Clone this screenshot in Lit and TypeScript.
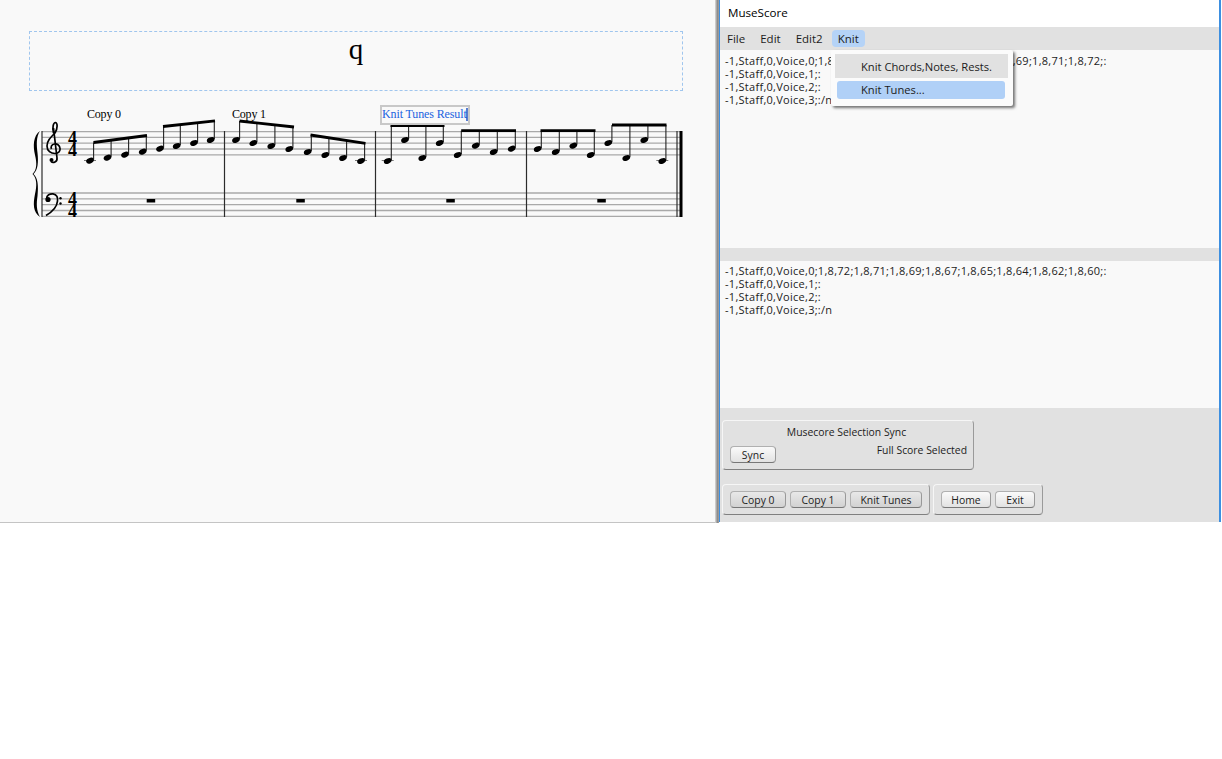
import { LitElement, html, css, svg } from 'lit';
import { customElement } from 'lit/decorators.js';

type Group = { heads: [number, number][]; beam: [number, number, number, number] };

const FORWARD = '-1,Staff,0,Voice,0;1,8,60;1,8,62;1,8,64;1,8,65;1,8,67;1,8,69;1,8,71;1,8,72;:';
const REVERSE = '-1,Staff,0,Voice,0;1,8,72;1,8,71;1,8,69;1,8,67;1,8,65;1,8,64;1,8,62;1,8,60;:';
const VOICES = ['-1,Staff,0,Voice,1;:', '-1,Staff,0,Voice,2;:', '-1,Staff,0,Voice,3;:/n'];

const GROUPS: Group[] = [
  { heads: [[90, 160.7], [107.5, 157.7], [125, 154.7], [142.7, 151.7]], beam: [94, 142.5, 146.5, 135.5] },
  { heads: [[160, 148.7], [176.7, 146], [194, 143], [210.7, 140]], beam: [163.5, 126.5, 214.5, 120.8] },
  { heads: [[236, 140], [253.3, 143], [271.3, 146], [289.3, 149]], beam: [240, 121, 293.5, 127] },
  { heads: [[307.7, 152], [325.3, 155], [343, 158], [361, 161]], beam: [311, 135, 365, 143.3] },
  { heads: [[387.7, 161], [405, 140], [422.3, 158], [439.7, 143]], beam: [391, 125.7, 444, 125.7] },
  { heads: [[457.7, 155], [475.7, 145.7], [493.7, 152], [511.7, 148.7]], beam: [461.7, 130.7, 515.5, 130.7] },
  { heads: [[537.7, 149], [555.7, 152], [573.3, 145.7], [590.7, 155]], beam: [541, 130.7, 595, 130.7] },
  { heads: [[608.3, 143], [626.3, 158], [644.3, 140], [662.3, 161]], beam: [612.5, 125, 666, 125] },
];

const TREBLE_LINES = [131.7, 137.4, 143.2, 149, 154.8];
const BASS_LINES = [193, 198.8, 204.6, 210.5, 216.3];
const BARLINES = [224.5, 375.5, 526.5];
const RESTS = [150.7, 300.3, 450.3, 601.3];

@customElement('app-root')
export class AppRoot extends LitElement {
  static styles = css`
    :host {
      display: block;
      width: 1222px;
      height: 759px;
      background: #fff;
      overflow: hidden;
    }

    .window {
      display: flex;
      height: 523px;
    }

    .score-pane {
      width: 715px;
      flex: none;
      height: 522px;
      background: #f9f9f9;
      border-bottom: 1px solid #c4c4c4;
    }

    .title-frame {
      height: 58px;
      margin: 31px 32px 0 29px;
      border: 1px dashed #a0c6ee;
      text-align: center;
      font: 29px/34px "Liberation Serif", serif;
      color: #000;
    }

    .staff {
      display: block;
      margin-top: 9px;
    }

    .splitter {
      width: 4px;
      flex: none;
      height: 523px;
      background: linear-gradient(90deg, #d0d0d0 0, #c8c8c8 25%, #8c8c8c 50%, #8c8c8c 75%, #a8a8a8 100%);
    }

    .plugin {
      position: relative;
      width: 499px;
      flex: none;
      height: 522px;
      border-left: 1px solid #3d8fe0;
      border-right: 2px solid #3d8fe0;
      display: flex;
      flex-direction: column;
      background: #e1e1e1;
      font: 10.4px/13px "Open Sans", "Noto Sans", sans-serif;
      color: #1c1c1c;
    }

    .titlebar {
      height: 27px;
      flex: none;
      background: #fff;
      padding-left: 8px;
      font-size: 11.6px;
      line-height: 26px;
      color: #000;
    }

    .menubar {
      height: 23px;
      flex: none;
      display: flex;
      align-items: center;
      padding-left: 1px;
      font-size: 11.5px;
    }

    .menubar span {
      height: 17px;
      line-height: 17px;
      padding: 0 6px;
      margin-right: 3px;
      border-radius: 4px;
    }

    .menubar span.open {
      background: #b5d3f7;
    }

    .editor {
      background: #f9f9f9;
      padding: 4px 5px;
      white-space: pre;
      overflow: hidden;
      font-size: 11px;
      letter-spacing: 0.28px;
    }

    .editor.top {
      height: 190px;
      flex: none;
    }

    .editor.bottom {
      height: 140px;
      flex: none;
      margin-top: 13px;
      padding-top: 3px;
    }

    .menu {
      position: absolute;
      left: 111px;
      top: 50px;
      width: 182px;
      height: 56px;
      padding-top: 4px;
      box-sizing: border-box;
      background: #fbfbfb;
      box-shadow: 2px 2px 3px rgb(0 0 0 / 0.55);
      border-radius: 2px;
      font-size: 11.2px;
    }

    .menu .plain {
      height: 24px;
      line-height: 26px;
      background: #e1e1e1;
      margin: 0 5px 3px 4px;
      padding-left: 26px;
    }

    .menu .active {
      height: 18px;
      line-height: 18px;
      background: #b0d0f7;
      border-radius: 3px;
      margin: 0 8px 0 6px;
      padding-left: 24px;
    }

    .controls {
      flex: 1;
      padding: 12px 0 0 2px;
      display: flex;
      flex-direction: column;
      gap: 14px;
    }

    .box {
      border: 1px solid #f6f6f6;
      border-right-color: #9a9a9a;
      border-bottom-color: #808080;
      border-radius: 4px;
      box-sizing: border-box;
    }

    .sync {
      width: 252px;
      height: 50px;
      display: grid;
      grid-template-columns: 1fr auto;
      align-content: start;
      padding: 5px 6px 0 7px;
    }

    .sync .heading {
      grid-column: 1 / 3;
      text-align: center;
      height: 13px;
      padding-right: 4px;
    }

    .sync .state {
      margin-top: 5px;
    }

    .sync button {
      margin-top: 7px;
      justify-self: start;
    }

    .row {
      display: flex;
      gap: 3px;
    }

    .actions {
      height: 31px;
      display: flex;
      align-items: flex-start;
      gap: 4px;
      padding: 6px 7px 0 7px;
    }

    button {
      height: 17px;
      padding: 0;
      border: 1px solid #b0b0b0;
      border-bottom-color: #777;
      border-right-color: #999;
      border-radius: 4px;
      background: linear-gradient(#fafafa, #e2e2e2);
      font: inherit;
      color: #1c1c1c;
      line-height: 14px;
    }

    button.pressed {
      background: linear-gradient(#e8e8e8, #d2d2d2);
    }

    .w46 { width: 46px; }
    .w56 { width: 56px; }
    .w72 { width: 72px; }
    .w50 { width: 50px; }
    .w40 { width: 40px; }

    .note {
      fill: #000;
    }

    .line {
      stroke: #a9a9a9;
      stroke-width: 1.3;
    }

    .bar {
      stroke: #2c2c2c;
      stroke-width: 1.2;
    }

    .stem {
      stroke: #222;
      stroke-width: 1.1;
    }

    .beam {
      stroke: #000;
      stroke-width: 2.8;
    }

    .ledger {
      stroke: #777;
      stroke-width: 1;
    }

    .clef {
      fill: none;
      stroke: #000;
      stroke-width: 1.7;
    }

    .label {
      font: 12px "Liberation Serif", serif;
      letter-spacing: -0.2px;
      fill: #000;
    }

    .label.selected {
      letter-spacing: -0.12px;
      fill: #1a62e0;
    }

    .caret {
      stroke: #1448c0;
      stroke-width: 1.4;
    }

    .time {
      font: bold 18px "Liberation Serif", serif;
      fill: #000;
      text-anchor: middle;
    }

    .selection {
      fill: #f9f9f9;
      stroke: #c8c8c8;
      stroke-width: 2;
    }
  `;

  private renderGroup(g: Group) {
    const [x1, y1, x2, y2] = g.beam;
    const slope = (y2 - y1) / (x2 - x1);
    return svg`
      ${g.heads.map(([x, y]) => {
        const sx = x + 3.6;
        const top = y1 + (sx - x1) * slope;
        const ledger = y > 159.5;
        return svg`
          ${ledger ? svg`<line class="ledger" x1=${x - 6} x2=${x + 6} y1="160.5" y2="160.5"></line>` : ''}
          <line class="stem" x1=${sx} x2=${sx} y1=${top} y2=${y - 1}></line>
          <ellipse class="note" cx=${x} cy=${y} rx="4" ry="2.7" transform="rotate(-24 ${x} ${y})"></ellipse>
        `;
      })}
      <line class="beam" x1=${x1 - 0.5} y1=${y1} x2=${x2 + 0.5} y2=${y2}></line>
    `;
  }

  private renderStaff() {
    return html`
      <svg class="staff" width="716" height="130" viewBox="0 100 716 130">
        ${[...TREBLE_LINES, ...BASS_LINES].map(y => svg`<line class="line" x1="42" x2="682" y1=${y} y2=${y}></line>`)}
        <line class="bar" x1="42" x2="42" y1="131" y2="217"></line>
        ${BARLINES.map(x => svg`<line class="bar" x1=${x} x2=${x} y1="131" y2="217"></line>`)}
        <line class="bar" x1="677" x2="677" y1="131" y2="217"></line>
        <rect class="note" x="679.5" y="131" width="3" height="86"></rect>

        <path class="note" d="M40 131 C33 136 33 146 35 155 C37 163 37 170 32.5 174 C37 178 37 186 35 194 C33 204 33 212 40 217 C36 210 36.5 203 37.5 196 C38.5 186 38 178 33.5 174 C38 170 38.5 162 37.5 153 C36.5 145 36 137 40 131 Z"></path>

        <!-- treble clef -->
        <path class="clef" d="M53.5 133 C52 127 53.5 122.5 55.5 122.5 C57.5 123 58 128 55 133 C50 138 47 141 47 146 C47 151 51 153.5 55 153.5 C59 153.5 60.5 150.5 60 148 C59.5 145 57 143.5 54.5 144 C51.5 144.5 50.5 147 51.5 149"></path>
        <path class="clef" d="M53.5 128 L57 158 C57.5 162 53 163.5 51 161.5"></path>
        <circle class="note" cx="51.5" cy="160" r="2"></circle>

        <!-- bass clef -->
        <path class="clef" d="M46.5 199 C46.5 195 50 193.6 53 193.8 C57 194.2 58 198 57.5 201 C57 207 52 212 46 215.5"></path>
        <circle class="note" cx="48" cy="199.5" r="2.6"></circle>
        <circle class="note" cx="60.5" cy="198.3" r="1.2"></circle>
        <circle class="note" cx="60.5" cy="203.5" r="1.2"></circle>

        <text class="time" x="72.5" y="143.5">4</text>
        <text class="time" x="72.5" y="155.5">4</text>
        <text class="time" x="72.5" y="205">4</text>
        <text class="time" x="72.5" y="217">4</text>

        ${GROUPS.map(g => this.renderGroup(g))}
        ${RESTS.map(x => svg`<rect class="note" x=${x - 4} y="199" width="8.5" height="3.5"></rect>`)}

        <text class="label" x="87" y="118">Copy 0</text>
        <text class="label" x="232" y="118">Copy 1</text>
        <rect class="selection" x="381" y="106" width="88" height="18"></rect>
        <text class="label selected" x="382" y="118">Knit Tunes Result</text>
        <line class="caret" x1="467" x2="467" y1="108" y2="121"></line>
      </svg>
    `;
  }

  render() {
    return html`
      <div class="window">
        <div class="score-pane">
          <div class="title-frame">q</div>
          ${this.renderStaff()}
        </div>
        <div class="splitter"></div>
        <div class="plugin">
          <div class="titlebar">MuseScore</div>
          <div class="menubar">
            <span>File</span><span>Edit</span><span>Edit2</span><span class="open">Knit</span>
          </div>
          <div class="editor top">${[FORWARD, ...VOICES].join('\n')}</div>
          <div class="editor bottom">${[REVERSE, ...VOICES].join('\n')}</div>
          <div class="controls">
            <div class="box sync">
              <div class="heading">Musecore Selection Sync</div>
              <button class="w46">Sync</button>
              <div class="state">Full Score Selected</div>
            </div>
            <div class="row">
              <div class="box actions">
                <button class="pressed w56">Copy 0</button>
                <button class="pressed w56">Copy 1</button>
                <button class="pressed w72">Knit Tunes</button>
              </div>
              <div class="box actions">
                <button class="w50">Home</button>
                <button class="w40">Exit</button>
              </div>
            </div>
          </div>
          <div class="menu">
            <div class="plain">Knit Chords,Notes, Rests.</div>
            <div class="active">Knit Tunes...</div>
          </div>
        </div>
      </div>
    `;
  }
}
